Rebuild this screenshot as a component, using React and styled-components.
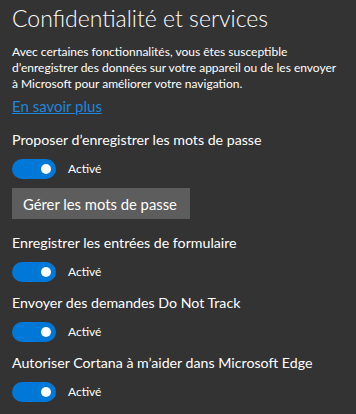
import React from 'react';
import styled, { createGlobalStyle } from 'styled-components';

const GlobalStyle = createGlobalStyle`
  html, body {
    margin: 0;
    padding: 0;
    background: #333333;
  }
  body {
    font-family: Lato, "Noto Sans", sans-serif;
    color: #ffffff;
  }
`;

const Panel = styled.div`
  width: 356px;
  height: 414px;
  box-sizing: border-box;
  padding: 3px 12px 0 12px;
  background: #333333;
  overflow: hidden;
`;

const Title = styled.h1`
  margin: 0;
  font-size: 23px;
  font-weight: 300;
  line-height: 30px;
  color: #ffffff;
`;

const Intro = styled.p`
  margin: 11px 0 0 0;
  font-size: 12px;
  line-height: 16px;
  color: #ffffff;
`;

const MoreLink = styled.a`
  display: inline-block;
  margin-top: 4px;
  font-size: 15px;
  line-height: 20px;
  color: #1f86dc;
  text-decoration: underline;
  cursor: pointer;
`;

const Setting = styled.div`
  display: flex;
  flex-direction: column;
  align-items: flex-start;
  margin-top: ${p => p.$gap || 10}px;
`;

const Label = styled.div`
  font-size: 14.2px;
  line-height: 20px;
  color: #ffffff;
`;

const ToggleRow = styled.div`
  display: flex;
  align-items: center;
  gap: 12px;
  margin-top: 9px;
`;

const Track = styled.div`
  position: relative;
  width: 44px;
  height: 20px;
  border-radius: 10px;
  background: ${p => (p.$on ? '#0078d7' : 'transparent')};
`;

const Knob = styled.span`
  position: absolute;
  top: 5px;
  left: ${p => (p.$on ? '29px' : '5px')};
  width: 10px;
  height: 10px;
  border-radius: 50%;
  background: #ffffff;
`;

const State = styled.span`
  font-size: 12px;
  line-height: 16px;
  color: #ffffff;
`;

const Button = styled.button`
  margin-top: 9px;
  height: 31px;
  padding: 0 13px 0 11px;
  border: none;
  background: #5d5d5d;
  color: #ffffff;
  font-family: inherit;
  font-size: 14.8px;
`;

function Toggle({ on = true }) {
  return (
    <ToggleRow>
      <Track $on={on}>
        <Knob $on={on} />
      </Track>
      <State>{on ? 'Activé' : 'Désactivé'}</State>
    </ToggleRow>
  );
}

export default function App() {
  return (
    <>
      <GlobalStyle />
      <Panel>
        <Title>Confidentialité et services</Title>
        <Intro>
          Avec certaines fonctionnalités, vous êtes susceptible d’enregistrer des données sur votre appareil ou de les envoyer à Microsoft pour améliorer votre navigation.
        </Intro>
        <MoreLink>En savoir plus</MoreLink>
        <Setting $gap={14}>
          <Label>Proposer d’enregistrer les mots de passe</Label>
          <Toggle />
          <Button>Gérer les mots de passe</Button>
        </Setting>
        <Setting $gap={14}>
          <Label>Enregistrer les entrées de formulaire</Label>
          <Toggle />
        </Setting>
        <Setting $gap={11}>
          <Label>Envoyer des demandes Do Not Track</Label>
          <Toggle />
        </Setting>
        <Setting $gap={11}>
          <Label>Autoriser Cortana à m’aider dans Microsoft Edge</Label>
          <Toggle />
        </Setting>
      </Panel>
    </>
  );
}
